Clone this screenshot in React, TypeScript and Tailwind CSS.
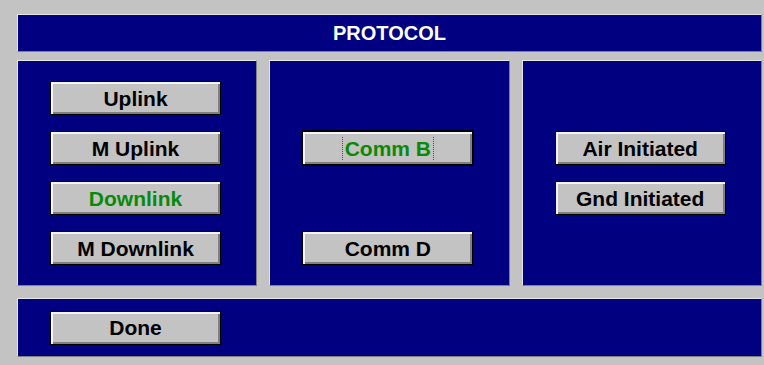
const FONT = { fontFamily: '"Liberation Sans", Arial, sans-serif' };

type Btn = { label: string; green?: boolean; focused?: boolean } | null;

function Button({ b }: { b: Btn }) {
  if (!b) return <div className="h-[34px]" />;
  return (
    <button
      className={
        "w-[171px] h-[34px] bg-[#c3c3c3] border border-black flex items-center justify-center text-[21px] font-bold leading-none shadow-[inset_2px_2px_0_#f4f4f4,inset_-2px_-2px_0_#808080] " +
        (b.focused ? "outline-1 outline-black " : "") +
        (b.green ? "text-[#088a08]" : "text-black")
      }
    >
      {b.focused ? (
        <span className="px-[2px] py-[1px] border-x border-dotted border-[#505050]">{b.label}</span>
      ) : (
        b.label
      )}
    </button>
  );
}

function Panel({ buttons }: { buttons: Btn[] }) {
  return (
    <div className="bg-[#000080] border-t border-l border-t-[#e6e6e6] border-l-[#e6e6e6] border-b border-r border-b-[#808080] border-r-[#808080] pt-[20px] pl-[32px] flex flex-col gap-[16px]">
      {buttons.map((b, i) => (
        <Button key={i} b={b} />
      ))}
    </div>
  );
}

export default function App() {
  return (
    <div className="w-[764px] h-[365px] bg-[#c3c3c3] pt-[14px] pl-[17px] pr-[2px]" style={FONT}>
      <div className="h-[38px] bg-[#000080] border-t border-l border-t-[#e6e6e6] border-l-[#e6e6e6] border-b border-r border-b-[#808080] border-r-[#808080] flex items-center justify-center text-white text-[20px] font-bold">
        PROTOCOL
      </div>

      <div className="mt-[8px] grid grid-cols-3 gap-[12px] h-[226px]">
        <Panel
          buttons={[
            { label: "Uplink" },
            { label: "M Uplink" },
            { label: "Downlink", green: true },
            { label: "M Downlink" },
          ]}
        />
        <Panel
          buttons={[null, { label: "Comm B", green: true, focused: true }, null, { label: "Comm D" }]}
        />
        <Panel buttons={[null, { label: "Air Initiated" }, { label: "Gnd Initiated" }, null]} />
      </div>

      <div className="mt-[12px] h-[59px] bg-[#000080] border-t border-l border-t-[#e6e6e6] border-l-[#e6e6e6] border-b border-r border-b-[#808080] border-r-[#808080] flex items-center pl-[32px]">
        <Button b={{ label: "Done" }} />
      </div>
    </div>
  );
}
